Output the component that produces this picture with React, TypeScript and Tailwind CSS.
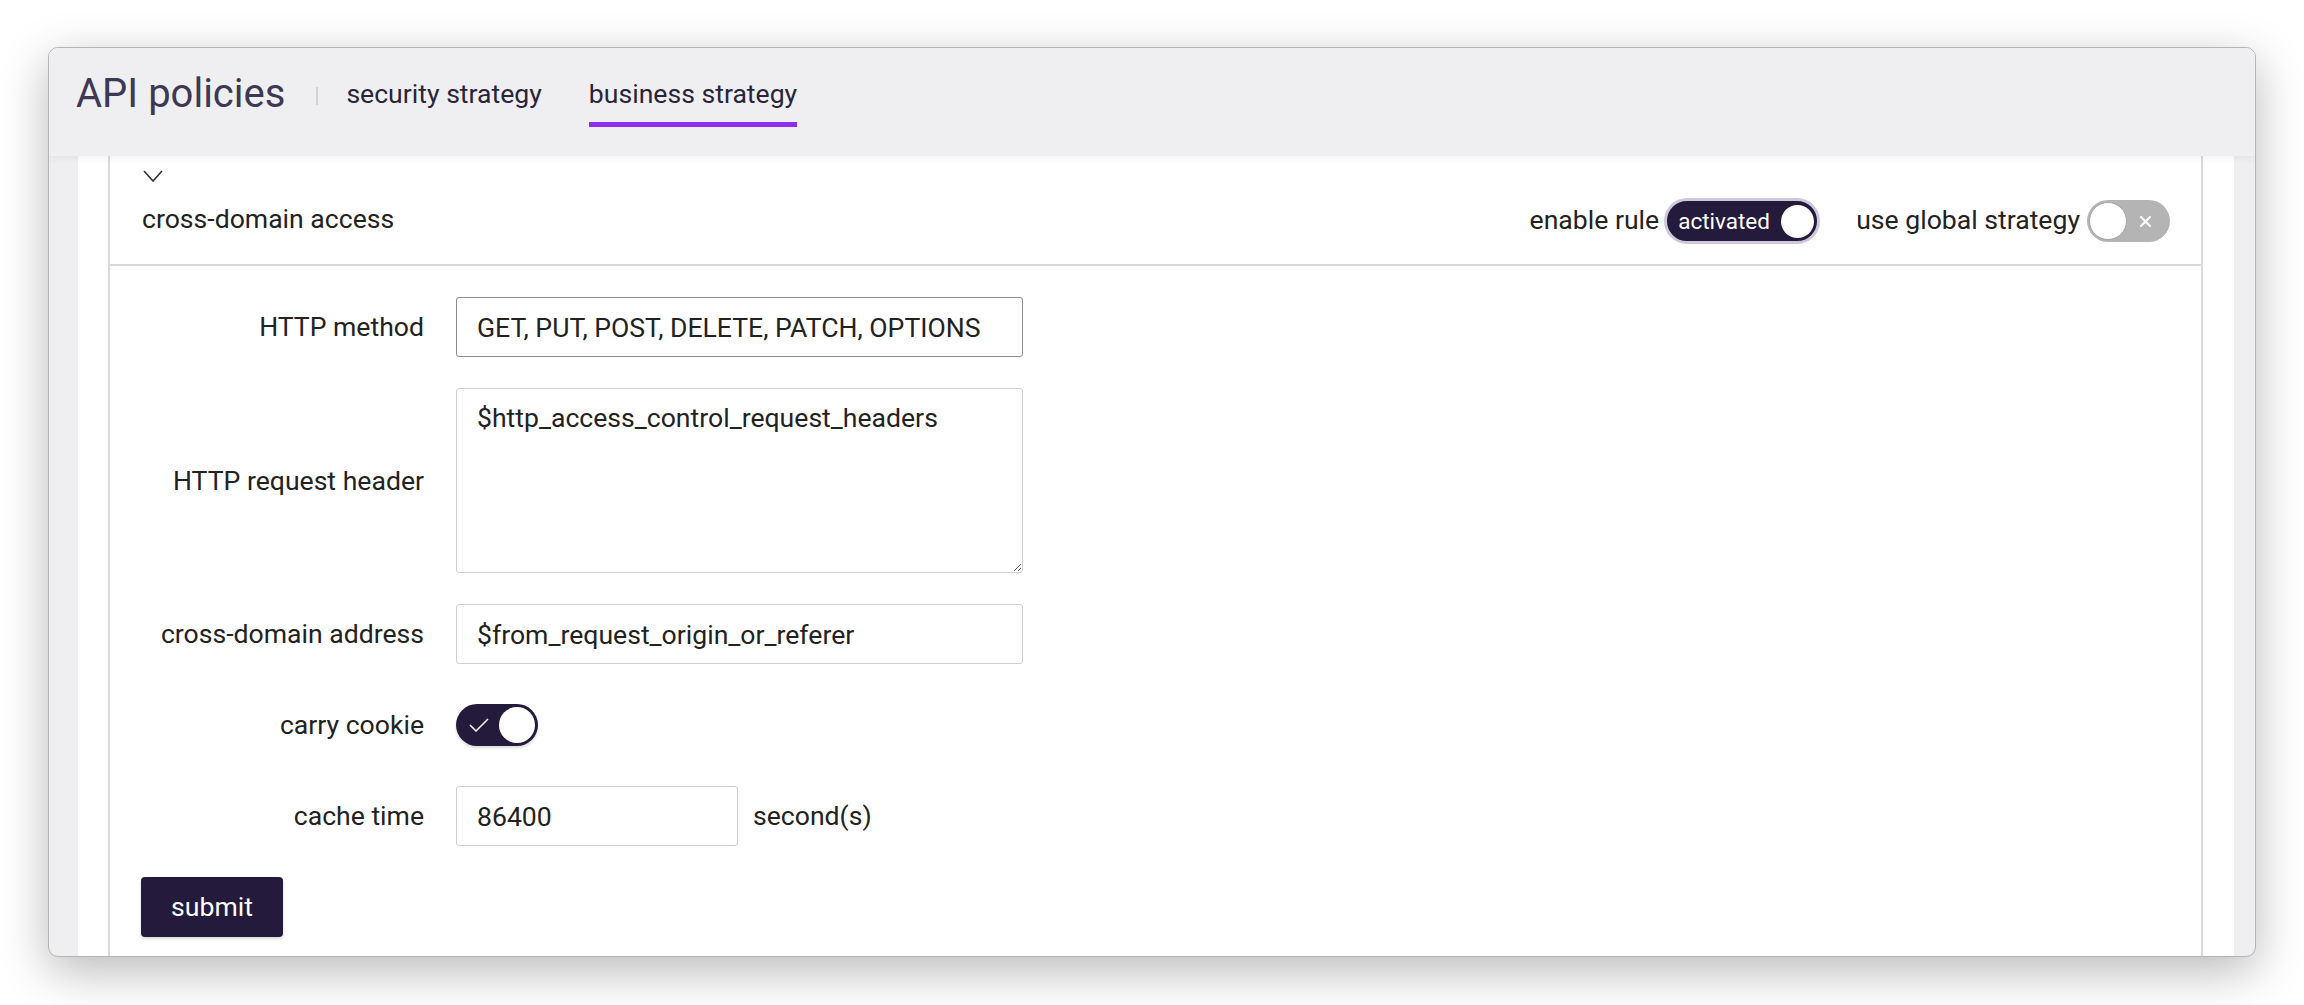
import { useState } from "react";

const labelCls = "w-[283px] shrink-0 text-right text-[26.6px] leading-[32px] text-[#222]";
const inputCls =
  "h-full w-[567px] rounded-[3px] border bg-white pl-[20px] text-[26.6px] text-[#222] outline-none";

const App = () => {
  const [enabled, setEnabled] = useState(true);
  const [useGlobal, setUseGlobal] = useState(false);
  const [carryCookie, setCarryCookie] = useState(true);
  const [tab, setTab] = useState("business");

  return (
    <div className="h-[1005px] w-[2304px] overflow-hidden bg-white pl-[48px] pt-[47px] font-[Roboto,sans-serif]">
      <div className="flex h-[910px] w-[2208px] flex-col overflow-hidden rounded-[10px] border border-[#b4b4b4] bg-[#efeff2] shadow-[0_14px_48px_rgba(0,0,0,0.28)]">
        <header className="relative z-10 flex h-[108px] shrink-0 items-start bg-[#efeff2] pl-[27px] pt-[21px] shadow-[0_3px_8px_rgba(0,0,0,0.05)]">
          <h1 className="text-[40px] leading-[50px] text-[#3d3853]">API policies</h1>
          <div className="ml-[31px] mt-[18px] h-[18px] w-[2px] bg-[#d3d3d7]" />
          <nav className="ml-[28px] mt-[9px] flex gap-[47px]">
            {[
              { key: "security", label: "security strategy" },
              { key: "business", label: "business strategy" },
            ].map((t) => (
              <button
                key={t.key}
                onClick={() => setTab(t.key)}
                className="flex flex-col items-stretch text-[26.6px] leading-[32px] text-[#29243b]"
              >
                <span>{t.label}</span>
                <span
                  className={
                    tab === t.key
                      ? "mt-[12px] h-[5px] bg-[#8e2df2]"
                      : "mt-[12px] h-[5px] bg-transparent"
                  }
                />
              </button>
            ))}
          </nav>
        </header>

        <div className="ml-[29px] mr-[21px] flex-1 overflow-hidden bg-white">
          <div className="ml-[30px] mr-[31px] h-full border-x-2 border-[#dadada]">
            {/* card header */}
            <div className="border-b-2 border-[#dadada] pb-[20px] pl-[32px] pr-[31px] pt-[14px]">
              <svg width="20" height="12" viewBox="0 0 20 12" className="ml-[1px] block">
                <polyline points="1,1 10,11 19,1" fill="none" stroke="#333" strokeWidth="1.6" />
              </svg>
              <div className="mt-[16px] flex h-[46px] items-center">
                <span className="pb-[5px] text-[26.6px] leading-[32px] text-[#222]">cross-domain access</span>
                <div className="ml-auto flex items-center">
                  <span className="pb-[3px] text-[26.6px] leading-[32px] text-[#222]">enable rule</span>
                  <button
                    onClick={() => setEnabled(!enabled)}
                    className="ml-[5px] flex h-[46px] w-[156px] items-center rounded-full border-[3px] border-[#cdc8da] bg-[#241b3c] pl-[11px] pr-[3px]"
                  >
                    <span className="flex-1 text-left text-[22.5px] leading-none text-white">activated</span>
                    <span className="h-[33px] w-[33px] rounded-full bg-white" />
                  </button>
                  <span className="ml-[36px] pb-[3px] text-[26.6px] leading-[32px] text-[#222]">use global strategy</span>
                  <button
                    onClick={() => setUseGlobal(!useGlobal)}
                    className="ml-[7px] flex h-[42px] w-[83px] items-center rounded-full bg-[#b4b4b4] pl-[2px] pr-[18px]"
                  >
                    <span className="h-[38px] w-[38px] rounded-full border border-[#a6a6a6] bg-white" />
                    <svg width="13" height="13" viewBox="0 0 13 13" className="ml-auto">
                      <path d="M2 2 L11 11 M11 2 L2 11" stroke="#fff" strokeWidth="2.2" strokeLinecap="round" />
                    </svg>
                  </button>
                </div>
              </div>
            </div>

            {/* form */}
            <div className="flex flex-col gap-[31px] pl-[31px] pt-[31px]">
              <div className="flex h-[60px] items-center">
                <label className={labelCls}>HTTP method</label>
                <input
                  className={`${inputCls} ml-[32px] border-[#8d8d8d]`}
                  defaultValue="GET, PUT, POST, DELETE, PATCH, OPTIONS"
                />
              </div>

              <div className="flex h-[185px] items-center">
                <label className={labelCls}>HTTP request header</label>
                <textarea
                  className="ml-[32px] h-full w-[567px] rounded-[3px] border border-[#cfcfcf] bg-white pl-[20px] pt-[13px] text-[26.6px] leading-[32px] text-[#222] outline-none"
                  defaultValue="$http_access_control_request_headers"
                />
              </div>

              <div className="flex h-[60px] items-center">
                <label className={labelCls}>cross-domain address</label>
                <input
                  className={`${inputCls} ml-[32px] border-[#cfcfcf]`}
                  defaultValue="$from_request_origin_or_referer"
                />
              </div>

              <div className="flex h-[60px] items-center">
                <label className={labelCls}>carry cookie</label>
                <button
                  onClick={() => setCarryCookie(!carryCookie)}
                  className="ml-[32px] flex h-[42px] w-[82px] items-center rounded-full bg-[#241b3c] pl-[13px] pr-[3px] shadow-[0_2px_3px_rgba(0,0,0,0.15)]"
                >
                  <svg width="20" height="14" viewBox="0 0 20 14">
                    <polyline points="1,7 7,13 19,1" fill="none" stroke="#fff" strokeWidth="1.5" />
                  </svg>
                  <span className="ml-auto h-[36px] w-[36px] rounded-full bg-white" />
                </button>
              </div>

              <div className="flex h-[60px] items-center">
                <label className={labelCls}>cache time</label>
                <input
                  className="ml-[32px] h-full w-[282px] rounded-[3px] border border-[#cfcfcf] bg-white pl-[20px] text-[26.6px] text-[#222] outline-none"
                  defaultValue="86400"
                />
                <span className="ml-[15px] text-[26.6px] leading-[32px] text-[#222]">second(s)</span>
              </div>

              <div>
                <button className="h-[60px] w-[142px] rounded-[4px] bg-[#241b3c] text-[26.6px] text-white shadow-[0_2px_3px_rgba(0,0,0,0.15)]">
                  submit
                </button>
              </div>
            </div>
          </div>
        </div>
      </div>
    </div>
  );
};

export default App;
